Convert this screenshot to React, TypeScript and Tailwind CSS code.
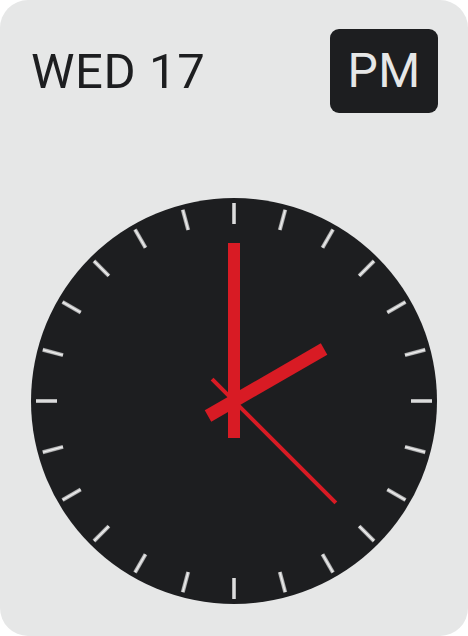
const ticks = Array.from({ length: 24 }, (_, i) => i * 15);

function ClockFace() {
  return (
    <svg width="406" height="406" viewBox="-203 -203 406 406" className="block">
      <defs>
        <linearGradient id="tick" x1="0" y1="0" x2="1" y2="0">
          <stop offset="0" stopColor="#9a9b9c" />
          <stop offset="0.5" stopColor="#f2f2f2" />
          <stop offset="1" stopColor="#9a9b9c" />
        </linearGradient>
      </defs>
      <circle cx="0" cy="0" r="203" fill="#1d1e20" />
      {ticks.map(a => (
        <rect
          key={a}
          x="-2"
          y="-198"
          width="4"
          height="21"
          fill="url(#tick)"
          transform={`rotate(${a})`}
        />
      ))}
      {/* second */}
      <rect x="-2" y="-144" width="4" height="175" fill="#d81b24" transform="rotate(135)" />
      {/* hour */}
      <rect x="-6.5" y="-104" width="13" height="134" fill="#d81b24" transform="rotate(60)" />
      {/* minute */}
      <rect x="-6" y="-158" width="12" height="195" fill="#d81b24" />
    </svg>
  );
}

export default function App() {
  return (
    <div className="w-[468px] h-[636px] bg-white">
      <div
        className="w-full h-full rounded-[28px] bg-[#e6e7e7] px-[30px] pt-[29px]"
        style={{ fontFamily: "Roboto, 'Liberation Sans', sans-serif" }}
      >
        <div className="flex items-center justify-between h-[84px]">
          <span className="pl-[1px] text-[49px] leading-none tracking-[0.6px] text-[#1d1e20]">WED 17</span>
          <div className="w-[108px] h-[84px] rounded-[9px] bg-[#1d1e20] flex items-center justify-center text-[48px] leading-none tracking-[0.5px] text-[#e6e7e7]">
            PM
          </div>
        </div>
        <div className="mt-[85px] flex justify-center">
          <ClockFace />
        </div>
      </div>
    </div>
  );
}
